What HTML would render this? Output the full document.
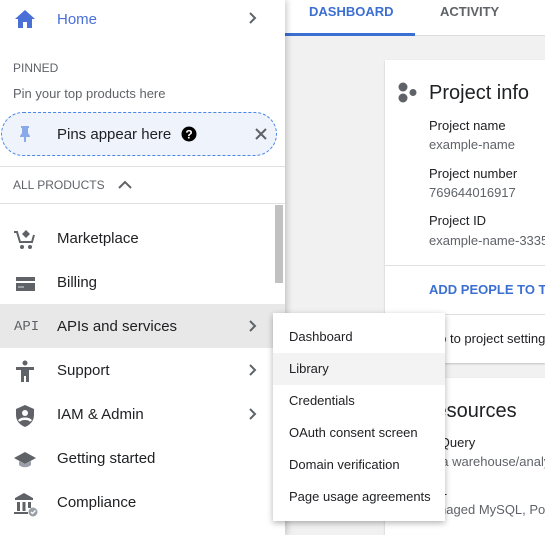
<!DOCTYPE html>
<html><head><style>
*{margin:0;padding:0;box-sizing:border-box}
html,body{width:545px;height:535px;overflow:hidden}
body{position:relative;font-family:"Liberation Sans",sans-serif;background:#f1f1f1;color:#202124}
.abs{position:absolute;white-space:nowrap}
#side{position:absolute;left:0;top:0;width:285px;height:535px;background:#fff;box-shadow:2px 0 6px rgba(0,0,0,.2);z-index:2}
.row{position:absolute;left:0;width:285px;height:44px}
.row .t{position:absolute;left:57px;top:14px;font-size:15px;color:#202124}
.row svg.i{position:absolute;left:13px;top:12px}
.chev{position:absolute;left:247px;top:15px}
#menu{position:absolute;left:273px;top:313px;width:172px;height:208px;background:#fff;box-shadow:0 2px 6px rgba(0,0,0,.3);z-index:3}
#menu div{height:32px;line-height:32px;padding-left:16px;font-size:13px;color:#202124}
.card{position:absolute;left:385px;background:#fff;width:160px;overflow:hidden;box-shadow:0 1px 2px rgba(0,0,0,.2)}
.lbl{font-size:13px;color:#202124}
.val{font-size:13px;color:#5f6368}
</style></head><body>
<div id="side">
 <div class="row" style="top:0">
  <svg class="i" style="left:14px;top:9px" width="22" height="20" viewBox="0 0 22 20"><path d="M11 1L1 10h3v9h5v-6h4v6h5v-9h3z" fill="#4a6fd6"/></svg>
  <span class="t" style="top:11px;color:#4a6fd6">Home</span>
  <svg class="chev" style="top:11px" width="12" height="14" viewBox="0 0 12 14"><path d="M3 2l5 5-5 5" stroke="#5f6368" stroke-width="2" fill="none"/></svg>
 </div>
 <div class="abs" style="left:13px;top:61px;font-size:12px;color:#5f6368">PINNED</div>
 <div class="abs" style="left:13px;top:86px;font-size:13px;color:#5f6368">Pin your top products here</div>
 <div class="abs" style="left:1px;top:112px;width:276px;height:44px;border:1px dashed #4a86e8;border-radius:22px;background:#eef3fc"></div>
 <svg class="abs" style="left:18px;top:125px" width="14" height="18" viewBox="0 0 14 18"><path d="M3 1h8v2h-1v5l2 3v1H8v5H6v-5H2v-1l2-3V3H3z" fill="#8aa9e8"/></svg>
 <div class="abs" style="left:57px;top:126px;font-size:15px">Pins appear here</div>
 <svg class="abs" style="left:181px;top:126px" width="16" height="16" viewBox="0 0 16 16"><circle cx="8" cy="8" r="7.5" fill="#000"/><text x="8" y="12.5" font-size="12" font-weight="bold" fill="#fff" text-anchor="middle" font-family="Liberation Sans">?</text></svg>
 <svg class="abs" style="left:254px;top:127px" width="14" height="14" viewBox="0 0 14 14"><path d="M2 2l10 10M12 2L2 12" stroke="#5f6368" stroke-width="2"/></svg>
 <div class="abs" style="left:0;top:166px;width:285px;height:1px;background:#e0e0e0"></div>
 <div class="abs" style="left:13px;top:178px;font-size:12px;color:#5f6368">ALL PRODUCTS</div>
 <svg class="abs" style="left:117px;top:179px" width="16" height="12" viewBox="0 0 16 12"><path d="M2 9l6-6 6 6" stroke="#5f6368" stroke-width="2" fill="none"/></svg>
 <div class="abs" style="left:0;top:203px;width:285px;height:1px;background:#e0e0e0"></div>
 <div class="abs" style="left:275px;top:205px;width:8px;height:78px;background:#c1c1c1"></div>
 <div class="row" style="top:216px"><svg class="i" width="24" height="24" viewBox="0 0 24 24"><path d="M1 4h3l3 10h12l2-7" stroke="#5f6368" stroke-width="2" fill="none"/><path d="M13 2l4 4-4 4-4-4z" fill="#5f6368"/><circle cx="9" cy="19" r="2" fill="#5f6368"/><circle cx="17" cy="19" r="2" fill="#5f6368"/></svg><span class="t">Marketplace</span></div>
 <div class="row" style="top:260px"><svg class="i" width="24" height="24" viewBox="0 0 24 24"><rect x="3" y="5" width="19" height="14" fill="#5f6368"/><rect x="3" y="9" width="19" height="2" fill="#fff"/><rect x="5" y="14" width="6" height="2" fill="#9aa0a6"/></svg><span class="t">Billing</span></div>
 <div class="row" style="top:304px;background:#e8e8e8"><span class="abs" style="left:14px;top:15px;font-family:'Liberation Mono',monospace;font-size:14px;color:#5f6368">API</span><span class="t">APIs and services</span><svg class="chev" width="12" height="14" viewBox="0 0 12 14"><path d="M3 2l5 5-5 5" stroke="#5f6368" stroke-width="2" fill="none"/></svg></div>
 <div class="row" style="top:348px"><svg class="i" width="24" height="24" viewBox="0 0 24 24"><circle cx="12" cy="3" r="2.5" fill="#5f6368"/><path d="M3 7h18v3h-5v12h-3v-6h-2v6H8V10H3z" fill="#5f6368"/></svg><span class="t">Support</span><svg class="chev" width="12" height="14" viewBox="0 0 12 14"><path d="M3 2l5 5-5 5" stroke="#5f6368" stroke-width="2" fill="none"/></svg></div>
 <div class="row" style="top:392px"><svg class="i" width="24" height="24" viewBox="0 0 24 24"><path d="M12 1l9 4v6c0 6-4 10-9 12-5-2-9-6-9-12V5z" fill="#5f6368"/><circle cx="12" cy="9" r="3" fill="#fff"/><path d="M6 17c2-3 10-3 12 0" stroke="#fff" stroke-width="2.5" fill="none"/></svg><span class="t">IAM &amp; Admin</span><svg class="chev" width="12" height="14" viewBox="0 0 12 14"><path d="M3 2l5 5-5 5" stroke="#5f6368" stroke-width="2" fill="none"/></svg></div>
 <div class="row" style="top:436px"><svg class="i" width="24" height="24" viewBox="0 0 24 24"><path d="M12 4L1 10l11 6 11-6z" fill="#5f6368"/><path d="M6 13v4c3 3 9 3 12 0v-4l-6 3z" fill="#9aa0a6"/></svg><span class="t">Getting started</span></div>
 <div class="row" style="top:480px"><svg class="i" width="26" height="26" viewBox="0 0 26 26"><path d="M11 1L2 6v2h18V6z" fill="#5f6368"/><rect x="4" y="10" width="3" height="9" fill="#5f6368"/><rect x="9.5" y="10" width="3" height="9" fill="#5f6368"/><rect x="15" y="10" width="3" height="6" fill="#5f6368"/><rect x="1" y="20" width="14" height="2" fill="#5f6368"/><circle cx="20" cy="20" r="4.5" fill="#9aa0a6"/><path d="M18 20l1.5 1.5 3-3" stroke="#fff" stroke-width="1.3" fill="none"/></svg><span class="t">Compliance</span></div>
</div>
<div class="abs" style="left:285px;top:0;width:260px;height:36px;background:#fff;border-bottom:1px solid #dadce0"></div>
<div class="abs" style="left:309px;top:4px;font-size:13px;font-weight:bold;color:#3c6fd2">DASHBOARD</div>
<div class="abs" style="left:285px;top:33px;width:130px;height:3px;background:#3c6fd2"></div>
<div class="abs" style="left:440px;top:4px;font-size:13px;font-weight:bold;color:#5f6368">ACTIVITY</div>
<div class="card" style="top:60px;height:303px">
 <svg class="abs" style="left:12px;top:22px" width="22" height="22" viewBox="0 0 22 22"><circle cx="6" cy="5" r="4.5" fill="#5f6368"/><circle cx="6" cy="16" r="4.5" fill="#5f6368"/><circle cx="16" cy="10.5" r="3.5" fill="#5f6368"/></svg>
 <div class="abs" style="left:44px;top:22px;font-size:20px">Project info</div>
 <div class="abs lbl" style="left:44px;top:58px">Project name</div>
 <div class="abs val" style="left:44px;top:77px">example-name</div>
 <div class="abs lbl" style="left:44px;top:106px">Project number</div>
 <div class="abs val" style="left:44px;top:125px">769644016917</div>
 <div class="abs lbl" style="left:44px;top:153px">Project ID</div>
 <div class="abs val" style="left:44px;top:173px">example-name-3335</div>
 <div class="abs" style="left:0;top:205px;width:170px;height:1px;background:#e0e0e0"></div>
 <div class="abs" style="left:44px;top:222px;font-size:13px;font-weight:bold;color:#3c6fd2">ADD PEOPLE TO THIS PROJECT</div>
 <div class="abs" style="left:0;top:254px;width:170px;height:1px;background:#e0e0e0"></div>
 <div class="abs" style="left:44px;top:271px;font-size:13px">Go to project settings</div>
</div>
<div class="card" style="top:378px;height:157px">
 <div class="abs" style="left:36px;top:22px;font-size:20px">Resources</div>
 <div class="abs lbl" style="left:36px;top:57px">BigQuery</div>
 <div class="abs val" style="left:36px;top:76px">Data warehouse/analytics</div>
 <div class="abs lbl" style="left:36px;top:105px">SQL</div>
 <div class="abs val" style="left:36px;top:124px">Managed MySQL, PostgreSQL</div>
</div>
<div id="menu">
 <div style="margin-top:8px">Dashboard</div>
 <div style="background:#f3f3f3">Library</div>
 <div>Credentials</div>
 <div>OAuth consent screen</div>
 <div>Domain verification</div>
 <div>Page usage agreements</div>
</div>
</body></html>
